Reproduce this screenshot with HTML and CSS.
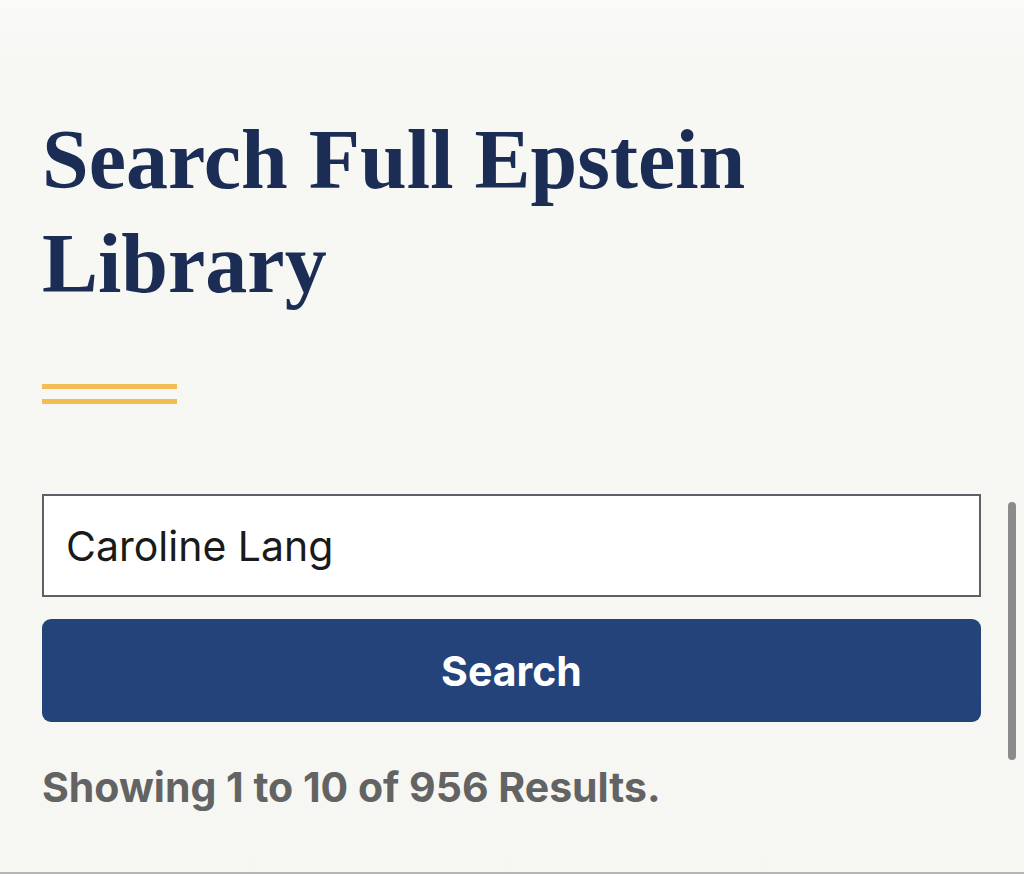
FILE: index.html
```html
<!DOCTYPE html>
<html lang="en">
<head>
<meta charset="utf-8">
<title>Search Full Epstein Library</title>
<link rel="stylesheet" href="styles.css">
</head>
<body>
<main class="page">
  <h1 class="title">Search Full Epstein Library</h1>
  <div class="rule"><span></span><span></span></div>
  <form class="search">
    <input class="search-input" type="text" value="Caroline Lang">
    <button class="search-button" type="button">Search</button>
  </form>
  <p class="results">Showing 1 to 10 of 956 Results.</p>
</main>
<div class="scrollbar"></div>
<div class="bottom-edge"></div>
</body>
</html>
```
FILE: styles.css
```css
html, body {
  margin: 0;
  padding: 0;
}
body {
  width: 1024px;
  height: 874px;
  overflow: hidden;
  position: relative;
  background: linear-gradient(#fafaf8 0px, #f7f7f4 60px, #f6f6f2 874px);
  font-family: "Inter", "Liberation Sans", sans-serif;
}
.page {
  width: 939px;
  padding: 108px 0 0 42px;
  display: flex;
  flex-direction: column;
}
.title {
  margin: 0;
  font-family: "Liberation Serif", serif;
  font-weight: 700;
  font-size: 84px;
  line-height: 104px;
  color: #1b2d54;
  width: 740px;
}
.rule {
  margin-top: 68px;
  display: flex;
  flex-direction: column;
  gap: 10px;
  width: 135px;
}
.rule span {
  display: block;
  height: 5px;
  background: #f2bd55;
}
.search {
  margin-top: 90px;
  display: flex;
  flex-direction: column;
  gap: 22px;
}
.search-input {
  box-sizing: border-box;
  width: 939px;
  height: 103px;
  margin: 0;
  border: 2px solid #5d6066;
  background: #fff;
  padding: 0 22px;
  font-family: "Inter", "Liberation Sans", sans-serif;
  font-size: 41px;
  color: #1a1a1a;
  outline: none;
}
.search-button {
  width: 939px;
  height: 103px;
  margin: 0;
  border: 0;
  border-radius: 9px;
  background: #24437a;
  color: #fff;
  font-family: "Inter", "Liberation Sans", sans-serif;
  font-weight: 700;
  font-size: 41px;
}
.results {
  margin: 40px 0 0;
  font-family: "Inter", "Liberation Sans", sans-serif;
  font-weight: 700;
  font-size: 41px;
  line-height: 50px;
  color: #636363;
}
.scrollbar {
  position: absolute;
  left: 1008px;
  top: 502px;
  width: 8px;
  height: 258px;
  border-radius: 4px;
  background: #8b8b8b;
}
.bottom-edge {
  position: absolute;
  left: 0;
  bottom: 0;
  width: 100%;
  height: 2px;
  background: #b4b4b4;
}
```
